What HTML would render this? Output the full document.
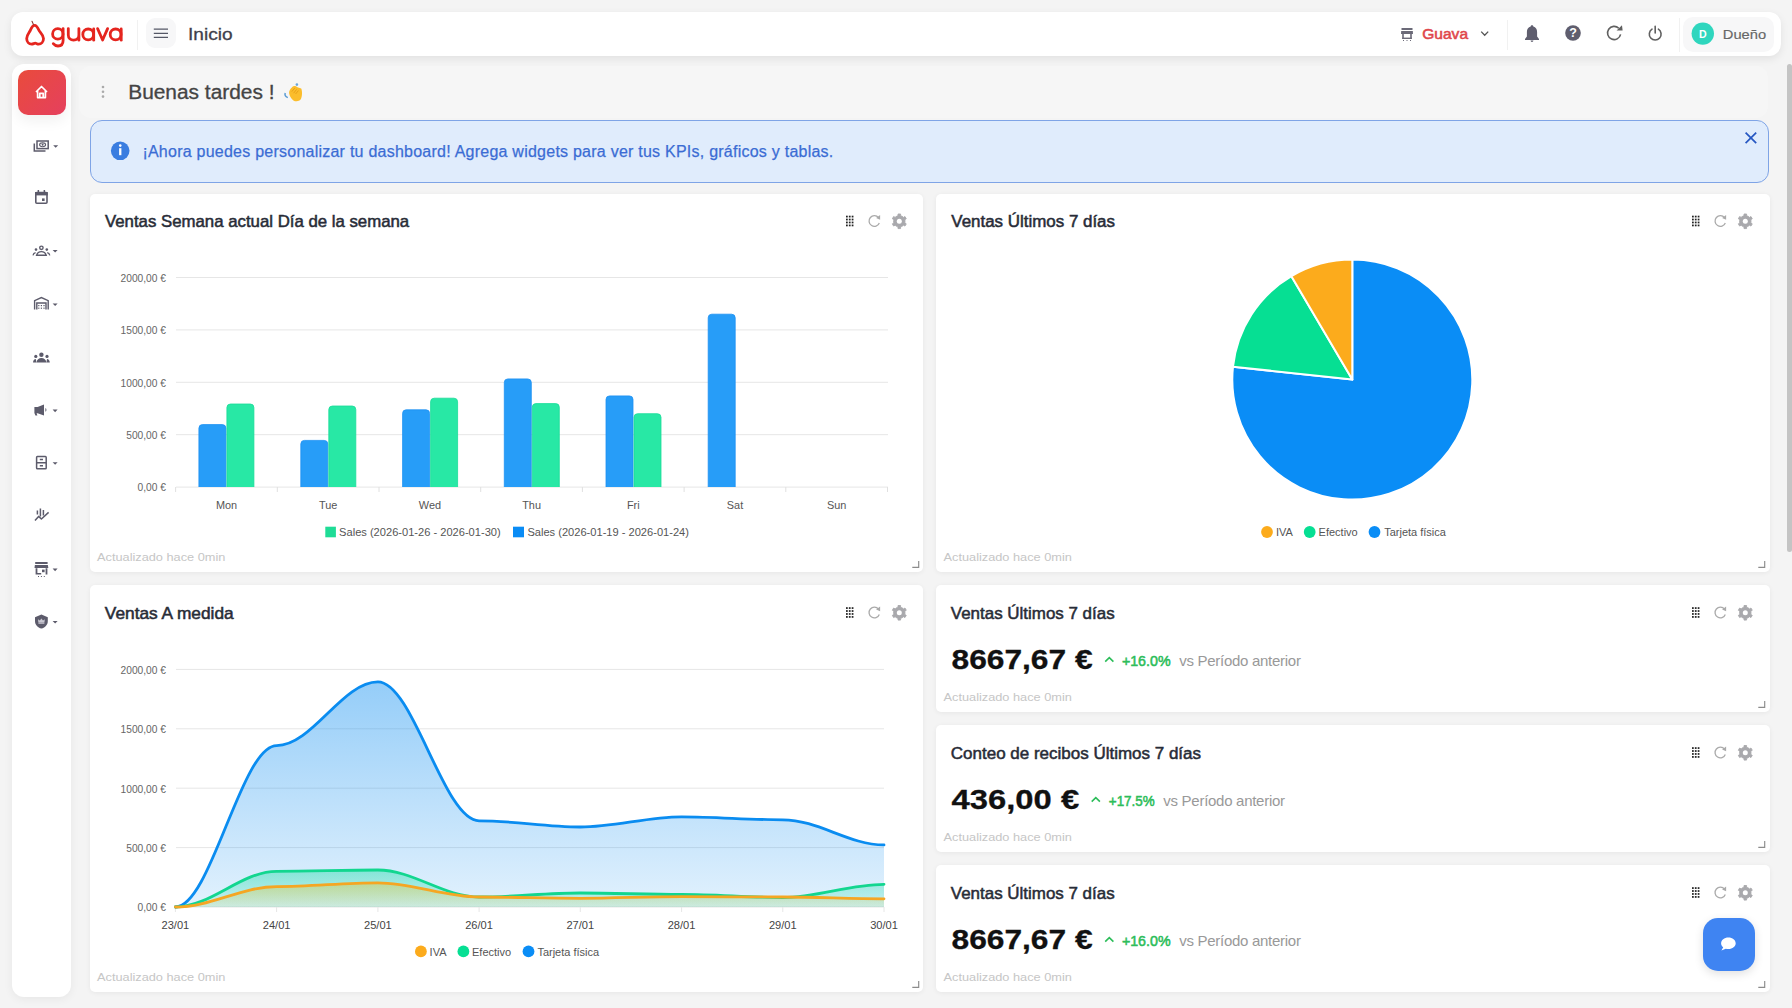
<!DOCTYPE html>
<html><head><meta charset="utf-8"><style>
*{margin:0;padding:0;box-sizing:border-box}
html,body{width:1792px;height:1008px;overflow:hidden;background:#f4f4f4;font-family:"Liberation Sans", sans-serif}
.box{position:absolute}
.card{position:absolute;background:#fff;border-radius:5px;box-shadow:0 1px 5px rgba(0,0,0,0.06)}
#ov{position:absolute;left:0;top:0}
</style></head>
<body>
<div class="box" style="left:11px;top:12px;width:1770px;height:44px;background:#fff;border-radius:12px;box-shadow:0 3px 9px rgba(0,0,0,0.08)"></div><div class="box" style="left:146px;top:18px;width:30px;height:30px;background:#f7f7f8;border-radius:9px"></div><div class="box" style="left:1683px;top:17px;width:91px;height:35px;background:#f7f7f8;border-radius:10px"></div><div class="box" style="left:136.5px;top:20px;width:1.0px;height:30px;background:#f1f1f1"></div><div class="box" style="left:1507px;top:20px;width:1px;height:30px;background:#f1f1f1"></div><div class="box" style="left:1679px;top:18px;width:1px;height:34px;background:#f1f1f1"></div><div class="box" style="left:12px;top:64px;width:59px;height:932.5px;background:#fff;border-radius:12px;box-shadow:0 2px 10px rgba(0,0,0,0.06)"></div><div class="box" style="left:17.5px;top:69.5px;width:48.5px;height:45.5px;background:linear-gradient(135deg,#e94b3c,#e5405e);border-radius:10px;box-shadow:0 6px 14px rgba(0,0,0,0.06)"></div><div class="box" style="left:79px;top:66px;width:1689px;height:52px;background:#f6f6f6;border-radius:12px"></div><div class="box" style="left:90px;top:120px;width:1679px;height:63px;background:#e0ecfc;border:1px solid #7fa4e6;border-radius:12px"></div><div class="card" style="left:90px;top:194px;width:833px;height:378px;"></div><div class="card" style="left:936px;top:194px;width:834px;height:378px;"></div><div class="card" style="left:90px;top:585px;width:833px;height:407px;"></div><div class="card" style="left:936px;top:585px;width:834px;height:127px;"></div><div class="card" style="left:936px;top:725px;width:834px;height:127px;"></div><div class="card" style="left:936px;top:865px;width:834px;height:127px;"></div><div class="box" style="left:1702.5px;top:918px;width:52.0px;height:52.5px;background:#3f84f2;border-radius:15px;box-shadow:0 3px 10px rgba(0,0,0,0.12)"></div><div class="box" style="left:1787px;top:64px;width:5px;height:488px;background:#c4c4c4;border-radius:3px"></div>
<svg id="ov" width="1792" height="1008" viewBox="0 0 1792 1008" font-family='"Liberation Sans", sans-serif'>
<g fill="none" stroke="#e5251f" stroke-width="2.8" stroke-linecap="round" stroke-linejoin="round"><path d="M34.6 25.3 C36.6 25.3 37.8 27.6 38.8 30 C39.8 32.4 43.5 34.6 43.5 38.6 C43.5 42 41.2 44.2 38.6 44.2 C37.2 44.2 36.4 43.2 35.2 43.2 C34 43.2 33.2 44.2 31.6 44.2 C29 44.2 26.7 42 26.7 38.6 C26.7 34.6 29.6 32.4 30.5 30 C31.4 27.6 32.6 25.3 34.6 25.3 Z"/><path d="M32 21.2 L33.4 24.4" stroke="#8a3a30" stroke-width="1.1"/><circle cx="57.8" cy="33.9" r="5.2"/><path d="M63.1 28.6 V40.6 C63.1 44.3 60.8 46 58 46 C55.9 46 54.3 45 53.3 43.7"/><path d="M68.3 28.6 V35 C68.3 38.3 70.6 40.2 73.6 40.2 C76.6 40.2 78.9 38.3 78.9 35 V28.6 M78.9 35 V40.2"/><circle cx="88.2" cy="34.4" r="5.4"/><path d="M93.7 29 V40.2"/><path d="M97.6 28.6 L102.6 40 L107.6 28.6"/><circle cx="115.6" cy="34.4" r="5.4"/><path d="M121.2 29 V40.2"/></g><g stroke="#555866" stroke-width="1.3"><path d="M153.8 29.2H168M153.8 33.3H168M153.8 37.3H168"/></g><text transform="translate(188 39.9) scale(1.125 1)" x="0" y="0" font-size="17" fill="#3f3f4b" font-weight="normal" text-anchor="start" stroke="#3f3f4b" stroke-width="0.3">Inicio</text><g fill="#6b6a78"><rect x="1401.5" y="28" width="11" height="2"/><path d="M1401.2 31 h11.6 l0.2 3 h-12z"/><rect x="1402.2" y="34" width="1.6" height="5"/><rect x="1410.2" y="34" width="1.6" height="5"/><rect x="1402.2" y="37.6" width="9.6" height="1.4"/><rect x="1403" y="40" width="1" height="1"/><rect x="1406.5" y="40" width="1" height="1"/><rect x="1410" y="40" width="1" height="1"/></g><text transform="translate(1422.2 38.6) scale(1.06 1)" x="0" y="0" font-size="14.7" fill="#e0474c" font-weight="normal" text-anchor="start" stroke="#e0474c" stroke-width="0.55">Guava</text><path d="M1481.2 31.6 L1484.7 35.2 L1488.2 31.6" fill="none" stroke="#555" stroke-width="1.3"/><path fill="#5f5e6e" d="M1532 25.2 c0.8 0 1.3 0.6 1.3 1.2 c2.5 0.7 3.8 2.8 3.8 5.5 v4.6 l1.9 2.6 v0.9 h-14 v-0.9 l1.9-2.6 v-4.6 c0-2.7 1.3-4.8 3.8-5.5 c0-0.6 0.5-1.2 1.3-1.2z M1530.6 40.6 h2.8 c0 0.8-0.6 1.4-1.4 1.4 s-1.4-0.6-1.4-1.4z"/><circle cx="1573" cy="33" r="7.8" fill="#5f5e6e"/><text x="1573" y="37.4" font-size="12.5" fill="#fff" font-weight="bold" text-anchor="middle">?</text><g fill="none" stroke="#606060" stroke-width="1.6"><path d="M1620.6 34.4 A6.6 6.6 0 1 1 1618.8 28.3"/></g><path d="M1616.6 30.4 L1622.6 30.6 L1622.0 25.2z" fill="#606060" transform="rotate(0)"/><g fill="none" stroke="#606060" stroke-width="1.6" stroke-linecap="round"><path d="M1652 29.2 A5.9 5.9 0 1 0 1658.4 29.2"/><path d="M1655.2 26.4 V33"/></g><circle cx="1702.8" cy="33.6" r="11.2" fill="#2fd6be"/><text x="1702.8" y="37.5" font-size="10.6" fill="#fff" font-weight="bold" text-anchor="middle">D</text><text transform="translate(1722.8 38.9) scale(1.13 1)" x="0" y="0" font-size="13" fill="#666" font-weight="normal" text-anchor="start" stroke="#666" stroke-width="0.15">Dueño</text><g fill="none" stroke="#fff" stroke-width="1.7" stroke-linejoin="round"><path d="M36 92 L41.5 86.5 L47 92 M37.6 90.6 V97.6 H45.4 V90.6 M39.8 97.6 V93.4 H43.2 V97.6"/></g><g fill="none" stroke="#5c5b6b" stroke-width="1.5"><rect x="37" y="141" width="11.2" height="7.6"/><path d="M34.3 143.6 V151 H45.5"/></g><ellipse cx="42.6" cy="144.8" rx="3" ry="1.9" fill="none" stroke="#5c5b6b" stroke-width="1.1"/><circle cx="42.6" cy="144.8" r="1" fill="#5c5b6b"/><path d="M53.199999999999996 145.20000000000002 h5 l-2.5 2.6z" fill="#5c5b6b"/><g fill="none" stroke="#5c5b6b" stroke-width="1.6"><rect x="35.8" y="192.6" width="11.2" height="10.6" rx="1"/></g><rect x="35" y="192" width="12.8" height="3.4" fill="#5c5b6b"/><rect x="37.6" y="190" width="1.5" height="3" fill="#5c5b6b"/><rect x="43.6" y="190" width="1.5" height="3" fill="#5c5b6b"/><rect x="42" y="198.4" width="2.6" height="2.6" fill="#5c5b6b"/><g fill="none" stroke="#5c5b6b" stroke-width="1.4"><circle cx="41.4" cy="247.8" r="1.7"/><path d="M36.6 255.2 c0.8-2.6 2.6-3.6 4.8-3.6 s4 1 4.8 3.6z"/></g><circle cx="36" cy="249.6" r="1.3" fill="#5c5b6b"/><circle cx="46.8" cy="249.6" r="1.3" fill="#5c5b6b"/><path d="M33 255.4 c0.3-1.6 1.2-2.6 2.6-2.8 M49.8 255.4 c-0.3-1.6-1.2-2.6-2.6-2.8" stroke="#5c5b6b" stroke-width="1.3" fill="none"/><path d="M52.599999999999994 250.0 h5 l-2.5 2.6z" fill="#5c5b6b"/><g fill="none" stroke="#5c5b6b" stroke-width="1.4"><path d="M34.6 309.4 V300.6 L41.4 297.6 L48.2 300.6 V309.4 M36.8 309.4 V303 H46 V309.4"/></g><g fill="#5c5b6b"><rect x="38.2" y="305" width="1.2" height="1.2"/><rect x="40.8" y="305" width="1.2" height="1.2"/><rect x="43.4" y="305" width="1.2" height="1.2"/><rect x="38.2" y="307.6" width="1.2" height="1.2"/><rect x="40.8" y="307.6" width="1.2" height="1.2"/><rect x="43.4" y="307.6" width="1.2" height="1.2"/></g><path d="M52.599999999999994 303.40000000000003 h5 l-2.5 2.6z" fill="#5c5b6b"/><g fill="#5c5b6b"><circle cx="41.4" cy="354.8" r="2.2"/><path d="M36.4 362.5 c0.4-3 2.4-4.6 5-4.6 s4.6 1.6 5 4.6z"/><circle cx="35.8" cy="356.4" r="1.6"/><circle cx="47" cy="356.4" r="1.6"/><path d="M33 362.5 c0.2-2 1.2-3.2 2.8-3.4 l0.6 3.4z M49.8 362.5 c-0.2-2-1.2-3.2-2.8-3.4 l-0.6 3.4z"/></g><g fill="#5c5b6b"><path d="M34.4 407 h3.2 l6.4-2.4 v11 l-6.4-2.4 h-1 l0.8 2.4 h-2 l-1-2.6 z"/><path d="M45.4 408 c1.4 0.6 1.4 3.2 0 3.8z"/></g><path d="M52.599999999999994 409.6 h5 l-2.5 2.6z" fill="#5c5b6b"/><g fill="none" stroke="#5c5b6b" stroke-width="1.5"><rect x="36.6" y="456.6" width="9.6" height="12.2" rx="0.8"/><path d="M36.6 462.7 H46.2 M39.8 459.6 H43 M39.8 465.8 H43"/></g><path d="M52.599999999999994 462.2 h5 l-2.5 2.6z" fill="#5c5b6b"/><g fill="none" stroke="#5c5b6b" stroke-width="1.5" stroke-linejoin="round"><path d="M35 520.6 L38.6 516.4 L41.4 519 L48.6 512.4"/><path d="M37.4 514.4 V510.6 M40.4 516.4 V508.6 M43.4 515.4 V510"/></g><g fill="#5c5b6b"><rect x="35.2" y="562" width="12.4" height="2"/><path d="M34.9 565 h13 l0.4 3 h-13.8z"/><path d="M35.6 568.2 h1.8 v6.4 h-1.8z M45.6 568.2 h1.8 v6.4 h-1.8z M35.6 573 h5.6 v1.6 h-5.6z"/><rect x="42" y="569.6" width="2.6" height="2.6"/><rect x="38" y="576" width="1" height="1"/><rect x="40.9" y="576" width="1" height="1"/><rect x="43.8" y="576" width="1" height="1"/></g><path d="M52.599999999999994 568.5999999999999 h5 l-2.5 2.6z" fill="#5c5b6b"/><path fill="#5c5b6b" d="M41.4 614.6 L47.8 617.2 V621 C47.8 624.8 45.2 627.6 41.4 628.6 C37.6 627.6 35 624.8 35 621 V617.2z"/><path fill="#c9c8d2" d="M38.4 624 h6 v-0.8 h-6z M38.4 622.8 l-0.4-3.6 l1.8 1.4 l1.6-2.2 l1.6 2.2 l1.8-1.4 l-0.4 3.6z"/><path d="M52.599999999999994 621.0 h5 l-2.5 2.6z" fill="#5c5b6b"/><g fill="#aaa"><circle cx="103" cy="87" r="1.3"/><circle cx="103" cy="91.8" r="1.3"/><circle cx="103" cy="96.6" r="1.3"/></g><text transform="translate(128.2 98.9) scale(1.066 1)" x="0" y="0" font-size="19.6" fill="#444" font-weight="normal" text-anchor="start" stroke="#444" stroke-width="0.3">Buenas tardes !</text><path fill="#fbbd2c" d="M289.2 93.6 C288.6 91 291 87.6 293.4 86.2 C295 85.4 296.4 86.4 297.4 87.2 L301.2 88.4 C302.4 91 302.4 96.6 300.6 99.6 C299 101.6 295.6 101.8 293.4 100.4 C291.2 98.8 289.6 96.4 289.2 93.6Z"/><path d="M291.8 91.6 L294.8 88 M293.6 93.2 L296.6 89.4 M295.6 94 L298.4 90.6" stroke="#e39a14" stroke-width="0.8" fill="none"/><path d="M285.2 93 C284.6 95 285.6 96.8 287.8 97.6" stroke="#5b9bd2" stroke-width="1.5" fill="none"/><circle cx="296.9" cy="84.6" r="1.3" fill="#6aa6dc"/><circle cx="120.2" cy="150.8" r="9.3" fill="#3a7de0"/><rect x="119.1" y="148.2" width="2.3" height="7" fill="#fff"/><circle cx="120.25" cy="145.6" r="1.3" fill="#fff"/><text x="142.4" y="156.5" font-size="16" fill="#3b6cd4" font-weight="normal" text-anchor="start" letter-spacing="0.24" stroke="#3b6cd4" stroke-width="0.25">¡Ahora puedes personalizar tu dashboard! Agrega widgets para ver tus KPIs, gráficos y tablas.</text><path d="M1745.6 132.6 L1756.2 143.2 M1756.2 132.6 L1745.6 143.2" stroke="#2657c2" stroke-width="1.7"/><text transform="translate(105 227.3) scale(1.05 1)" x="0" y="0" font-size="16" fill="#282c37" font-weight="normal" text-anchor="start" stroke="#282c37" stroke-width="0.5">Ventas Semana actual Día de la semana</text><g fill="#222"><rect x="846.00" y="215.70" width="1.75" height="1.75"/><rect x="848.85" y="215.70" width="1.75" height="1.75"/><rect x="851.70" y="215.70" width="1.75" height="1.75"/><rect x="846.00" y="218.65" width="1.75" height="1.75"/><rect x="848.85" y="218.65" width="1.75" height="1.75"/><rect x="851.70" y="218.65" width="1.75" height="1.75"/><rect x="846.00" y="221.60" width="1.75" height="1.75"/><rect x="848.85" y="221.60" width="1.75" height="1.75"/><rect x="851.70" y="221.60" width="1.75" height="1.75"/><rect x="846.00" y="224.55" width="1.75" height="1.75"/><rect x="848.85" y="224.55" width="1.75" height="1.75"/><rect x="851.70" y="224.55" width="1.75" height="1.75"/></g><path d="M879.3 222.9 A5.3 5.3 0 1 1 878.5 217.7" fill="none" stroke="#aaa" stroke-width="1.3"/><path d="M876.1 217.9 L880.1 219.7 L880.1 215.1z" fill="#aaa"/><polygon points="897.26,215.98 898.02,215.75 898.02,214.01 900.58,214.01 900.58,215.75 901.34,215.98 902.89,216.87 903.47,217.41 904.97,216.54 906.25,218.77 904.75,219.63 904.93,220.41 904.93,222.19 904.75,222.97 906.25,223.83 904.97,226.06 903.47,225.19 902.89,225.73 901.34,226.62 900.58,226.85 900.58,228.59 898.02,228.59 898.02,226.85 897.26,226.62 895.71,225.73 895.13,225.19 893.63,226.06 892.35,223.83 893.85,222.97 893.67,222.19 893.67,220.41 893.85,219.63 892.35,218.77 893.63,216.54 895.13,217.41 895.71,216.87" fill="#a9a9ad" stroke="#a9a9ad" stroke-width="0.9" stroke-linejoin="round"/><circle cx="899.30" cy="221.30" r="2.5" fill="#fff"/><path d="M912.3 567.4 H918.7 V561" fill="none" stroke="#8c8c8c" stroke-width="1.15"/><text transform="translate(97 561.0) scale(1.083 1)" x="0" y="0" font-size="11.8" fill="#c6c6c6" font-weight="normal" text-anchor="start">Actualizado hace 0min</text><text transform="translate(951.3 227.3) scale(1.058 1)" x="0" y="0" font-size="16" fill="#282c37" font-weight="normal" text-anchor="start" stroke="#282c37" stroke-width="0.5">Ventas Últimos 7 días</text><g fill="#222"><rect x="1692.00" y="215.70" width="1.75" height="1.75"/><rect x="1694.85" y="215.70" width="1.75" height="1.75"/><rect x="1697.70" y="215.70" width="1.75" height="1.75"/><rect x="1692.00" y="218.65" width="1.75" height="1.75"/><rect x="1694.85" y="218.65" width="1.75" height="1.75"/><rect x="1697.70" y="218.65" width="1.75" height="1.75"/><rect x="1692.00" y="221.60" width="1.75" height="1.75"/><rect x="1694.85" y="221.60" width="1.75" height="1.75"/><rect x="1697.70" y="221.60" width="1.75" height="1.75"/><rect x="1692.00" y="224.55" width="1.75" height="1.75"/><rect x="1694.85" y="224.55" width="1.75" height="1.75"/><rect x="1697.70" y="224.55" width="1.75" height="1.75"/></g><path d="M1725.3 222.9 A5.3 5.3 0 1 1 1724.5 217.7" fill="none" stroke="#aaa" stroke-width="1.3"/><path d="M1722.1 217.9 L1726.1 219.7 L1726.1 215.1z" fill="#aaa"/><polygon points="1743.26,215.98 1744.02,215.75 1744.02,214.01 1746.58,214.01 1746.58,215.75 1747.34,215.98 1748.89,216.87 1749.47,217.41 1750.97,216.54 1752.25,218.77 1750.75,219.63 1750.93,220.41 1750.93,222.19 1750.75,222.97 1752.25,223.83 1750.97,226.06 1749.47,225.19 1748.89,225.73 1747.34,226.62 1746.58,226.85 1746.58,228.59 1744.02,228.59 1744.02,226.85 1743.26,226.62 1741.71,225.73 1741.13,225.19 1739.63,226.06 1738.35,223.83 1739.85,222.97 1739.67,222.19 1739.67,220.41 1739.85,219.63 1738.35,218.77 1739.63,216.54 1741.13,217.41 1741.71,216.87" fill="#a9a9ad" stroke="#a9a9ad" stroke-width="0.9" stroke-linejoin="round"/><circle cx="1745.30" cy="221.30" r="2.5" fill="#fff"/><path d="M1758.3 567.4 H1764.7 V561" fill="none" stroke="#8c8c8c" stroke-width="1.15"/><text transform="translate(943.5 561.0) scale(1.083 1)" x="0" y="0" font-size="11.8" fill="#c6c6c6" font-weight="normal" text-anchor="start">Actualizado hace 0min</text><text transform="translate(104.8 618.9) scale(1.082 1)" x="0" y="0" font-size="16" fill="#282c37" font-weight="normal" text-anchor="start" stroke="#282c37" stroke-width="0.5">Ventas A medida</text><g fill="#222"><rect x="846.00" y="607.20" width="1.75" height="1.75"/><rect x="848.85" y="607.20" width="1.75" height="1.75"/><rect x="851.70" y="607.20" width="1.75" height="1.75"/><rect x="846.00" y="610.15" width="1.75" height="1.75"/><rect x="848.85" y="610.15" width="1.75" height="1.75"/><rect x="851.70" y="610.15" width="1.75" height="1.75"/><rect x="846.00" y="613.10" width="1.75" height="1.75"/><rect x="848.85" y="613.10" width="1.75" height="1.75"/><rect x="851.70" y="613.10" width="1.75" height="1.75"/><rect x="846.00" y="616.05" width="1.75" height="1.75"/><rect x="848.85" y="616.05" width="1.75" height="1.75"/><rect x="851.70" y="616.05" width="1.75" height="1.75"/></g><path d="M879.3 614.4 A5.3 5.3 0 1 1 878.5 609.2" fill="none" stroke="#aaa" stroke-width="1.3"/><path d="M876.1 609.4 L880.1 611.2 L880.1 606.6z" fill="#aaa"/><polygon points="897.26,607.48 898.02,607.25 898.02,605.51 900.58,605.51 900.58,607.25 901.34,607.48 902.89,608.37 903.47,608.91 904.97,608.04 906.25,610.27 904.75,611.13 904.93,611.91 904.93,613.69 904.75,614.47 906.25,615.33 904.97,617.56 903.47,616.69 902.89,617.23 901.34,618.12 900.58,618.35 900.58,620.09 898.02,620.09 898.02,618.35 897.26,618.12 895.71,617.23 895.13,616.69 893.63,617.56 892.35,615.33 893.85,614.47 893.67,613.69 893.67,611.91 893.85,611.13 892.35,610.27 893.63,608.04 895.13,608.91 895.71,608.37" fill="#a9a9ad" stroke="#a9a9ad" stroke-width="0.9" stroke-linejoin="round"/><circle cx="899.30" cy="612.80" r="2.5" fill="#fff"/><path d="M912.3 987.4 H918.7 V981" fill="none" stroke="#8c8c8c" stroke-width="1.15"/><text transform="translate(97 980.9) scale(1.083 1)" x="0" y="0" font-size="11.8" fill="#c6c6c6" font-weight="normal" text-anchor="start">Actualizado hace 0min</text><text transform="translate(950.8 618.9) scale(1.06 1)" x="0" y="0" font-size="16" fill="#282c37" font-weight="normal" text-anchor="start" stroke="#282c37" stroke-width="0.5">Ventas Últimos 7 días</text><g fill="#222"><rect x="1692.00" y="607.20" width="1.75" height="1.75"/><rect x="1694.85" y="607.20" width="1.75" height="1.75"/><rect x="1697.70" y="607.20" width="1.75" height="1.75"/><rect x="1692.00" y="610.15" width="1.75" height="1.75"/><rect x="1694.85" y="610.15" width="1.75" height="1.75"/><rect x="1697.70" y="610.15" width="1.75" height="1.75"/><rect x="1692.00" y="613.10" width="1.75" height="1.75"/><rect x="1694.85" y="613.10" width="1.75" height="1.75"/><rect x="1697.70" y="613.10" width="1.75" height="1.75"/><rect x="1692.00" y="616.05" width="1.75" height="1.75"/><rect x="1694.85" y="616.05" width="1.75" height="1.75"/><rect x="1697.70" y="616.05" width="1.75" height="1.75"/></g><path d="M1725.3 614.4 A5.3 5.3 0 1 1 1724.5 609.2" fill="none" stroke="#aaa" stroke-width="1.3"/><path d="M1722.1 609.4 L1726.1 611.2 L1726.1 606.6z" fill="#aaa"/><polygon points="1743.26,607.48 1744.02,607.25 1744.02,605.51 1746.58,605.51 1746.58,607.25 1747.34,607.48 1748.89,608.37 1749.47,608.91 1750.97,608.04 1752.25,610.27 1750.75,611.13 1750.93,611.91 1750.93,613.69 1750.75,614.47 1752.25,615.33 1750.97,617.56 1749.47,616.69 1748.89,617.23 1747.34,618.12 1746.58,618.35 1746.58,620.09 1744.02,620.09 1744.02,618.35 1743.26,618.12 1741.71,617.23 1741.13,616.69 1739.63,617.56 1738.35,615.33 1739.85,614.47 1739.67,613.69 1739.67,611.91 1739.85,611.13 1738.35,610.27 1739.63,608.04 1741.13,608.91 1741.71,608.37" fill="#a9a9ad" stroke="#a9a9ad" stroke-width="0.9" stroke-linejoin="round"/><circle cx="1745.30" cy="612.80" r="2.5" fill="#fff"/><path d="M1758.3 707.4 H1764.7 V701" fill="none" stroke="#8c8c8c" stroke-width="1.15"/><text transform="translate(951.5 668.5) scale(1.121 1)" x="0" y="0" font-size="28.3" fill="#111" font-weight="bold" text-anchor="start" stroke="#111" stroke-width="0.3">8667,67 €</text><path d="M1105.2 661.6 L1109.3 657.6 L1113.4 661.6" fill="none" stroke="#2dbd5a" stroke-width="1.6"/><text transform="translate(1121.9 666) scale(0.95 1)" x="0" y="0" font-size="15" fill="#2dbd5a" font-weight="normal" text-anchor="start" stroke="#2dbd5a" stroke-width="0.55">+16.0%</text><text x="1179.2" y="666" font-size="15" fill="#999" font-weight="normal" text-anchor="start" letter-spacing="-0.28">vs Período anterior</text><text transform="translate(943.5 700.9) scale(1.083 1)" x="0" y="0" font-size="11.8" fill="#c6c6c6" font-weight="normal" text-anchor="start">Actualizado hace 0min</text><text transform="translate(950.8 758.9) scale(1.062 1)" x="0" y="0" font-size="16" fill="#282c37" font-weight="normal" text-anchor="start" stroke="#282c37" stroke-width="0.5">Conteo de recibos Últimos 7 días</text><g fill="#222"><rect x="1692.00" y="747.20" width="1.75" height="1.75"/><rect x="1694.85" y="747.20" width="1.75" height="1.75"/><rect x="1697.70" y="747.20" width="1.75" height="1.75"/><rect x="1692.00" y="750.15" width="1.75" height="1.75"/><rect x="1694.85" y="750.15" width="1.75" height="1.75"/><rect x="1697.70" y="750.15" width="1.75" height="1.75"/><rect x="1692.00" y="753.10" width="1.75" height="1.75"/><rect x="1694.85" y="753.10" width="1.75" height="1.75"/><rect x="1697.70" y="753.10" width="1.75" height="1.75"/><rect x="1692.00" y="756.05" width="1.75" height="1.75"/><rect x="1694.85" y="756.05" width="1.75" height="1.75"/><rect x="1697.70" y="756.05" width="1.75" height="1.75"/></g><path d="M1725.3 754.4 A5.3 5.3 0 1 1 1724.5 749.2" fill="none" stroke="#aaa" stroke-width="1.3"/><path d="M1722.1 749.4 L1726.1 751.2 L1726.1 746.6z" fill="#aaa"/><polygon points="1743.26,747.48 1744.02,747.25 1744.02,745.51 1746.58,745.51 1746.58,747.25 1747.34,747.48 1748.89,748.37 1749.47,748.91 1750.97,748.04 1752.25,750.27 1750.75,751.13 1750.93,751.91 1750.93,753.69 1750.75,754.47 1752.25,755.33 1750.97,757.56 1749.47,756.69 1748.89,757.23 1747.34,758.12 1746.58,758.35 1746.58,760.09 1744.02,760.09 1744.02,758.35 1743.26,758.12 1741.71,757.23 1741.13,756.69 1739.63,757.56 1738.35,755.33 1739.85,754.47 1739.67,753.69 1739.67,751.91 1739.85,751.13 1738.35,750.27 1739.63,748.04 1741.13,748.91 1741.71,748.37" fill="#a9a9ad" stroke="#a9a9ad" stroke-width="0.9" stroke-linejoin="round"/><circle cx="1745.30" cy="752.80" r="2.5" fill="#fff"/><path d="M1758.3 847.4 H1764.7 V841" fill="none" stroke="#8c8c8c" stroke-width="1.15"/><text transform="translate(951.5 808.5) scale(1.159 1)" x="0" y="0" font-size="28.3" fill="#111" font-weight="bold" text-anchor="start" stroke="#111" stroke-width="0.3">436,00 €</text><path d="M1091.7 801.6 L1095.8 797.6 L1099.9 801.6" fill="none" stroke="#2dbd5a" stroke-width="1.6"/><text transform="translate(1108.8 806) scale(0.895 1)" x="0" y="0" font-size="15" fill="#2dbd5a" font-weight="normal" text-anchor="start" stroke="#2dbd5a" stroke-width="0.55">+17.5%</text><text x="1163.3" y="806" font-size="15" fill="#999" font-weight="normal" text-anchor="start" letter-spacing="-0.28">vs Período anterior</text><text transform="translate(943.5 840.9) scale(1.083 1)" x="0" y="0" font-size="11.8" fill="#c6c6c6" font-weight="normal" text-anchor="start">Actualizado hace 0min</text><text transform="translate(950.8 898.9) scale(1.06 1)" x="0" y="0" font-size="16" fill="#282c37" font-weight="normal" text-anchor="start" stroke="#282c37" stroke-width="0.5">Ventas Últimos 7 días</text><g fill="#222"><rect x="1692.00" y="887.20" width="1.75" height="1.75"/><rect x="1694.85" y="887.20" width="1.75" height="1.75"/><rect x="1697.70" y="887.20" width="1.75" height="1.75"/><rect x="1692.00" y="890.15" width="1.75" height="1.75"/><rect x="1694.85" y="890.15" width="1.75" height="1.75"/><rect x="1697.70" y="890.15" width="1.75" height="1.75"/><rect x="1692.00" y="893.10" width="1.75" height="1.75"/><rect x="1694.85" y="893.10" width="1.75" height="1.75"/><rect x="1697.70" y="893.10" width="1.75" height="1.75"/><rect x="1692.00" y="896.05" width="1.75" height="1.75"/><rect x="1694.85" y="896.05" width="1.75" height="1.75"/><rect x="1697.70" y="896.05" width="1.75" height="1.75"/></g><path d="M1725.3 894.4 A5.3 5.3 0 1 1 1724.5 889.2" fill="none" stroke="#aaa" stroke-width="1.3"/><path d="M1722.1 889.4 L1726.1 891.2 L1726.1 886.6z" fill="#aaa"/><polygon points="1743.26,887.48 1744.02,887.25 1744.02,885.51 1746.58,885.51 1746.58,887.25 1747.34,887.48 1748.89,888.37 1749.47,888.91 1750.97,888.04 1752.25,890.27 1750.75,891.13 1750.93,891.91 1750.93,893.69 1750.75,894.47 1752.25,895.33 1750.97,897.56 1749.47,896.69 1748.89,897.23 1747.34,898.12 1746.58,898.35 1746.58,900.09 1744.02,900.09 1744.02,898.35 1743.26,898.12 1741.71,897.23 1741.13,896.69 1739.63,897.56 1738.35,895.33 1739.85,894.47 1739.67,893.69 1739.67,891.91 1739.85,891.13 1738.35,890.27 1739.63,888.04 1741.13,888.91 1741.71,888.37" fill="#a9a9ad" stroke="#a9a9ad" stroke-width="0.9" stroke-linejoin="round"/><circle cx="1745.30" cy="892.80" r="2.5" fill="#fff"/><path d="M1758.3 987.4 H1764.7 V981" fill="none" stroke="#8c8c8c" stroke-width="1.15"/><text transform="translate(951.5 948.5) scale(1.121 1)" x="0" y="0" font-size="28.3" fill="#111" font-weight="bold" text-anchor="start" stroke="#111" stroke-width="0.3">8667,67 €</text><path d="M1105.2 941.6 L1109.3 937.6 L1113.4 941.6" fill="none" stroke="#2dbd5a" stroke-width="1.6"/><text transform="translate(1121.9 946) scale(0.95 1)" x="0" y="0" font-size="15" fill="#2dbd5a" font-weight="normal" text-anchor="start" stroke="#2dbd5a" stroke-width="0.55">+16.0%</text><text x="1179.2" y="946" font-size="15" fill="#999" font-weight="normal" text-anchor="start" letter-spacing="-0.28">vs Período anterior</text><text transform="translate(943.5 980.9) scale(1.083 1)" x="0" y="0" font-size="11.8" fill="#c6c6c6" font-weight="normal" text-anchor="start">Actualizado hace 0min</text><path fill="#fff" d="M1728.4 937.5 c4.1 0 7.3 2.6 7.3 5.8 s-3.2 5.8-7.3 5.8 c-0.9 0-1.8-0.1-2.6-0.4 l-4.4 1.7 l1.8-3.1 c-1.3-1-2.1-2.4-2.1-4 c0-3.2 3.2-5.8 7.3-5.8z"/><g stroke="#e6e6e6" stroke-width="1"><path d="M176 277.5H888"/><path d="M176 329.9H888"/><path d="M176 382.3H888"/><path d="M176 434.7H888"/><path d="M176 487.1H888"/></g><text transform="translate(166 281.8) scale(0.965 1)" x="0" y="0" font-size="10.6" fill="#666" font-weight="normal" text-anchor="end">2000,00 €</text><text transform="translate(166 334.2) scale(0.965 1)" x="0" y="0" font-size="10.6" fill="#666" font-weight="normal" text-anchor="end">1500,00 €</text><text transform="translate(166 386.6) scale(0.965 1)" x="0" y="0" font-size="10.6" fill="#666" font-weight="normal" text-anchor="end">1000,00 €</text><text transform="translate(166 439.0) scale(0.965 1)" x="0" y="0" font-size="10.6" fill="#666" font-weight="normal" text-anchor="end">500,00 €</text><text transform="translate(166 491.40000000000003) scale(0.965 1)" x="0" y="0" font-size="10.6" fill="#666" font-weight="normal" text-anchor="end">0,00 €</text><g stroke="#e0e0e0" stroke-width="1"><path d="M175.6 487V492"/><path d="M277.3 487V492"/><path d="M379.0 487V492"/><path d="M480.7 487V492"/><path d="M582.4 487V492"/><path d="M684.1 487V492"/><path d="M785.8 487V492"/><path d="M887.5 487V492"/></g><text x="226.5" y="509" font-size="10.9" fill="#555" font-weight="normal" text-anchor="middle">Mon</text><text x="328.2" y="509" font-size="10.9" fill="#555" font-weight="normal" text-anchor="middle">Tue</text><text x="429.9" y="509" font-size="10.9" fill="#555" font-weight="normal" text-anchor="middle">Wed</text><text x="531.6" y="509" font-size="10.9" fill="#555" font-weight="normal" text-anchor="middle">Thu</text><text x="633.3" y="509" font-size="10.9" fill="#555" font-weight="normal" text-anchor="middle">Fri</text><text x="735.0" y="509" font-size="10.9" fill="#555" font-weight="normal" text-anchor="middle">Sat</text><text x="836.7" y="509" font-size="10.9" fill="#555" font-weight="normal" text-anchor="middle">Sun</text><path d="M198.9 487V428.2Q198.9 424.59999999999997 202.5 424.59999999999997H222.3Q225.9 424.59999999999997 225.9 428.2V487" fill="#279df8" stroke="#1d90f2" stroke-width="0.8"/><path d="M226.9 487V407.6Q226.9 404.0 230.5 404.0H250.3Q253.9 404.0 253.9 407.6V487" fill="#28e8a5" stroke="#18dc98" stroke-width="0.8"/><path d="M300.79999999999995 487V444.0Q300.79999999999995 440.4 304.4 440.4H324.2Q327.8 440.4 327.8 444.0V487" fill="#279df8" stroke="#1d90f2" stroke-width="0.8"/><path d="M328.79999999999995 487V409.6Q328.79999999999995 406.0 332.4 406.0H352.2Q355.8 406.0 355.8 409.6V487" fill="#28e8a5" stroke="#18dc98" stroke-width="0.8"/><path d="M402.59999999999997 487V413.4Q402.59999999999997 409.79999999999995 406.2 409.79999999999995H426.0Q429.6 409.79999999999995 429.6 413.4V487" fill="#279df8" stroke="#1d90f2" stroke-width="0.8"/><path d="M430.59999999999997 487V401.8Q430.59999999999997 398.2 434.2 398.2H454.0Q457.6 398.2 457.6 401.8V487" fill="#28e8a5" stroke="#18dc98" stroke-width="0.8"/><path d="M504.29999999999995 487V382.5Q504.29999999999995 378.9 507.9 378.9H527.6999999999999Q531.3 378.9 531.3 382.5V487" fill="#279df8" stroke="#1d90f2" stroke-width="0.8"/><path d="M532.3 487V407.2Q532.3 403.59999999999997 535.9 403.59999999999997H555.6999999999999Q559.3 403.59999999999997 559.3 407.2V487" fill="#28e8a5" stroke="#18dc98" stroke-width="0.8"/><path d="M606.0 487V399.5Q606.0 395.9 609.6 395.9H629.4Q633.0 395.9 633.0 399.5V487" fill="#279df8" stroke="#1d90f2" stroke-width="0.8"/><path d="M634.0 487V417.3Q634.0 413.7 637.6 413.7H657.4Q661.0 413.7 661.0 417.3V487" fill="#28e8a5" stroke="#18dc98" stroke-width="0.8"/><path d="M708.1999999999999 487V317.8Q708.1999999999999 314.2 711.8 314.2H731.5999999999999Q735.1999999999999 314.2 735.1999999999999 317.8V487" fill="#279df8" stroke="#1d90f2" stroke-width="0.8"/><rect x="325.3" y="526.7" width="10.6" height="10.6" fill="#1fdc96"/><rect x="513" y="526.7" width="11" height="10.6" fill="#0a8cf5"/><text x="339.1" y="535.8" font-size="11.1" fill="#555" font-weight="normal" text-anchor="start">Sales (2026-01-26 - 2026-01-30)</text><text x="527.4" y="535.8" font-size="11.1" fill="#555" font-weight="normal" text-anchor="start">Sales (2026-01-19 - 2026-01-24)</text><path d="M1352.3 379.6L1352.30 259.60A120 120 0 1 1 1233.00 366.64z" fill="#0a8df6" stroke="#fff" stroke-width="2" stroke-linejoin="round"/><path d="M1352.3 379.6L1233.00 366.64A120 120 0 0 1 1291.40 276.20z" fill="#06df93" stroke="#fff" stroke-width="2" stroke-linejoin="round"/><path d="M1352.3 379.6L1291.40 276.20A120 120 0 0 1 1352.30 259.60z" fill="#fcab1c" stroke="#fff" stroke-width="2" stroke-linejoin="round"/><circle cx="1267" cy="532" r="5.9" fill="#fcab1c"/><text x="1276" y="535.9" font-size="11" fill="#555" font-weight="normal" text-anchor="start">IVA</text><circle cx="1309.7" cy="532" r="5.9" fill="#06df93"/><text x="1318.6" y="535.9" font-size="11" fill="#555" font-weight="normal" text-anchor="start">Efectivo</text><circle cx="1374.5" cy="532" r="5.9" fill="#0a8df6"/><text x="1384.2" y="535.9" font-size="11" fill="#555" font-weight="normal" text-anchor="start">Tarjeta física</text><g stroke="#e6e6e6" stroke-width="1"><path d="M176 669.4H884"/><path d="M176 728.8H884"/><path d="M176 788.2H884"/><path d="M176 847.6H884"/><path d="M176 907.0H884"/></g><text transform="translate(166 673.6999999999999) scale(0.965 1)" x="0" y="0" font-size="10.6" fill="#666" font-weight="normal" text-anchor="end">2000,00 €</text><text transform="translate(166 733.0999999999999) scale(0.965 1)" x="0" y="0" font-size="10.6" fill="#666" font-weight="normal" text-anchor="end">1500,00 €</text><text transform="translate(166 792.4999999999999) scale(0.965 1)" x="0" y="0" font-size="10.6" fill="#666" font-weight="normal" text-anchor="end">1000,00 €</text><text transform="translate(166 851.8999999999999) scale(0.965 1)" x="0" y="0" font-size="10.6" fill="#666" font-weight="normal" text-anchor="end">500,00 €</text><text transform="translate(166 911.3) scale(0.965 1)" x="0" y="0" font-size="10.6" fill="#666" font-weight="normal" text-anchor="end">0,00 €</text><g stroke="#e6e6e6" stroke-width="1"><path d="M175.4 907V912"/><path d="M276.6 907V912"/><path d="M377.9 907V912"/><path d="M479.1 907V912"/><path d="M580.3 907V912"/><path d="M681.6 907V912"/><path d="M782.8 907V912"/><path d="M884.0 907V912"/></g><text x="175.4" y="929.1" font-size="11.1" fill="#444" font-weight="normal" text-anchor="middle">23/01</text><text x="276.63" y="929.1" font-size="11.1" fill="#444" font-weight="normal" text-anchor="middle">24/01</text><text x="377.86" y="929.1" font-size="11.1" fill="#444" font-weight="normal" text-anchor="middle">25/01</text><text x="479.09000000000003" y="929.1" font-size="11.1" fill="#444" font-weight="normal" text-anchor="middle">26/01</text><text x="580.32" y="929.1" font-size="11.1" fill="#444" font-weight="normal" text-anchor="middle">27/01</text><text x="681.5500000000001" y="929.1" font-size="11.1" fill="#444" font-weight="normal" text-anchor="middle">28/01</text><text x="782.78" y="929.1" font-size="11.1" fill="#444" font-weight="normal" text-anchor="middle">29/01</text><text x="884.01" y="929.1" font-size="11.1" fill="#444" font-weight="normal" text-anchor="middle">30/01</text><defs><linearGradient id="gb" x1="0" y1="670" x2="0" y2="907" gradientUnits="userSpaceOnUse"><stop offset="0" stop-color="#0a8cf0" stop-opacity="0.45"/><stop offset="1" stop-color="#0a8cf0" stop-opacity="0.12"/></linearGradient><linearGradient id="gg" x1="0" y1="865" x2="0" y2="907" gradientUnits="userSpaceOnUse"><stop offset="0" stop-color="#10dda0" stop-opacity="0.45"/><stop offset="1" stop-color="#10dda0" stop-opacity="0.12"/></linearGradient><linearGradient id="go" x1="0" y1="880" x2="0" y2="907" gradientUnits="userSpaceOnUse"><stop offset="0" stop-color="#f8c020" stop-opacity="0.42"/><stop offset="1" stop-color="#f8c020" stop-opacity="0.08"/></linearGradient></defs><path d="M175.40 907.00C210.83 907.00 241.20 745.60 276.63 745.60C312.06 745.60 342.43 681.90 377.86 681.90C413.29 681.90 443.66 820.80 479.09 820.80C514.52 820.80 544.89 827.00 580.32 827.00C615.75 827.00 646.12 816.80 681.55 816.80C716.98 816.80 747.35 819.80 782.78 819.80C818.21 819.80 848.58 844.90 884.01 844.90L884.01 907L175.40 907z" fill="url(#gb)"/><path d="M175.40 907.00C210.83 907.00 241.20 871.30 276.63 871.30C312.06 871.30 342.43 870.00 377.86 870.00C413.29 870.00 443.66 897.00 479.09 897.00C514.52 897.00 544.89 893.00 580.32 893.00C615.75 893.00 646.12 894.50 681.55 894.50C716.98 894.50 747.35 897.50 782.78 897.50C818.21 897.50 848.58 884.30 884.01 884.30L884.01 907L175.40 907z" fill="url(#gg)"/><path d="M175.40 907.00C210.83 907.00 241.20 886.60 276.63 886.60C312.06 886.60 342.43 882.80 377.86 882.80C413.29 882.80 443.66 897.00 479.09 897.00C514.52 897.00 544.89 898.30 580.32 898.30C615.75 898.30 646.12 896.60 681.55 896.60C716.98 896.60 747.35 897.00 782.78 897.00C818.21 897.00 848.58 898.80 884.01 898.80L884.01 907L175.40 907z" fill="url(#go)"/><path d="M175.40 907.00C210.83 907.00 241.20 745.60 276.63 745.60C312.06 745.60 342.43 681.90 377.86 681.90C413.29 681.90 443.66 820.80 479.09 820.80C514.52 820.80 544.89 827.00 580.32 827.00C615.75 827.00 646.12 816.80 681.55 816.80C716.98 816.80 747.35 819.80 782.78 819.80C818.21 819.80 848.58 844.90 884.01 844.90" fill="none" stroke="#0a8cf0" stroke-width="2.8" stroke-linecap="round"/><path d="M175.40 907.00C210.83 907.00 241.20 871.30 276.63 871.30C312.06 871.30 342.43 870.00 377.86 870.00C413.29 870.00 443.66 897.00 479.09 897.00C514.52 897.00 544.89 893.00 580.32 893.00C615.75 893.00 646.12 894.50 681.55 894.50C716.98 894.50 747.35 897.50 782.78 897.50C818.21 897.50 848.58 884.30 884.01 884.30" fill="none" stroke="#12d68f" stroke-width="2.8" stroke-linecap="round"/><path d="M175.40 907.00C210.83 907.00 241.20 886.60 276.63 886.60C312.06 886.60 342.43 882.80 377.86 882.80C413.29 882.80 443.66 897.00 479.09 897.00C514.52 897.00 544.89 898.30 580.32 898.30C615.75 898.30 646.12 896.60 681.55 896.60C716.98 896.60 747.35 897.00 782.78 897.00C818.21 897.00 848.58 898.80 884.01 898.80" fill="none" stroke="#f5a623" stroke-width="2.8" stroke-linecap="round"/><circle cx="420.9" cy="951.4" r="5.9" fill="#fcab1c"/><text x="429.6" y="955.9" font-size="11" fill="#555" font-weight="normal" text-anchor="start">IVA</text><circle cx="463.4" cy="951.4" r="5.9" fill="#06df93"/><text x="472" y="955.9" font-size="11" fill="#555" font-weight="normal" text-anchor="start">Efectivo</text><circle cx="528.5" cy="951.4" r="5.9" fill="#0a8df6"/><text x="537.4" y="955.9" font-size="11" fill="#555" font-weight="normal" text-anchor="start">Tarjeta física</text>
</svg>
</body></html>
